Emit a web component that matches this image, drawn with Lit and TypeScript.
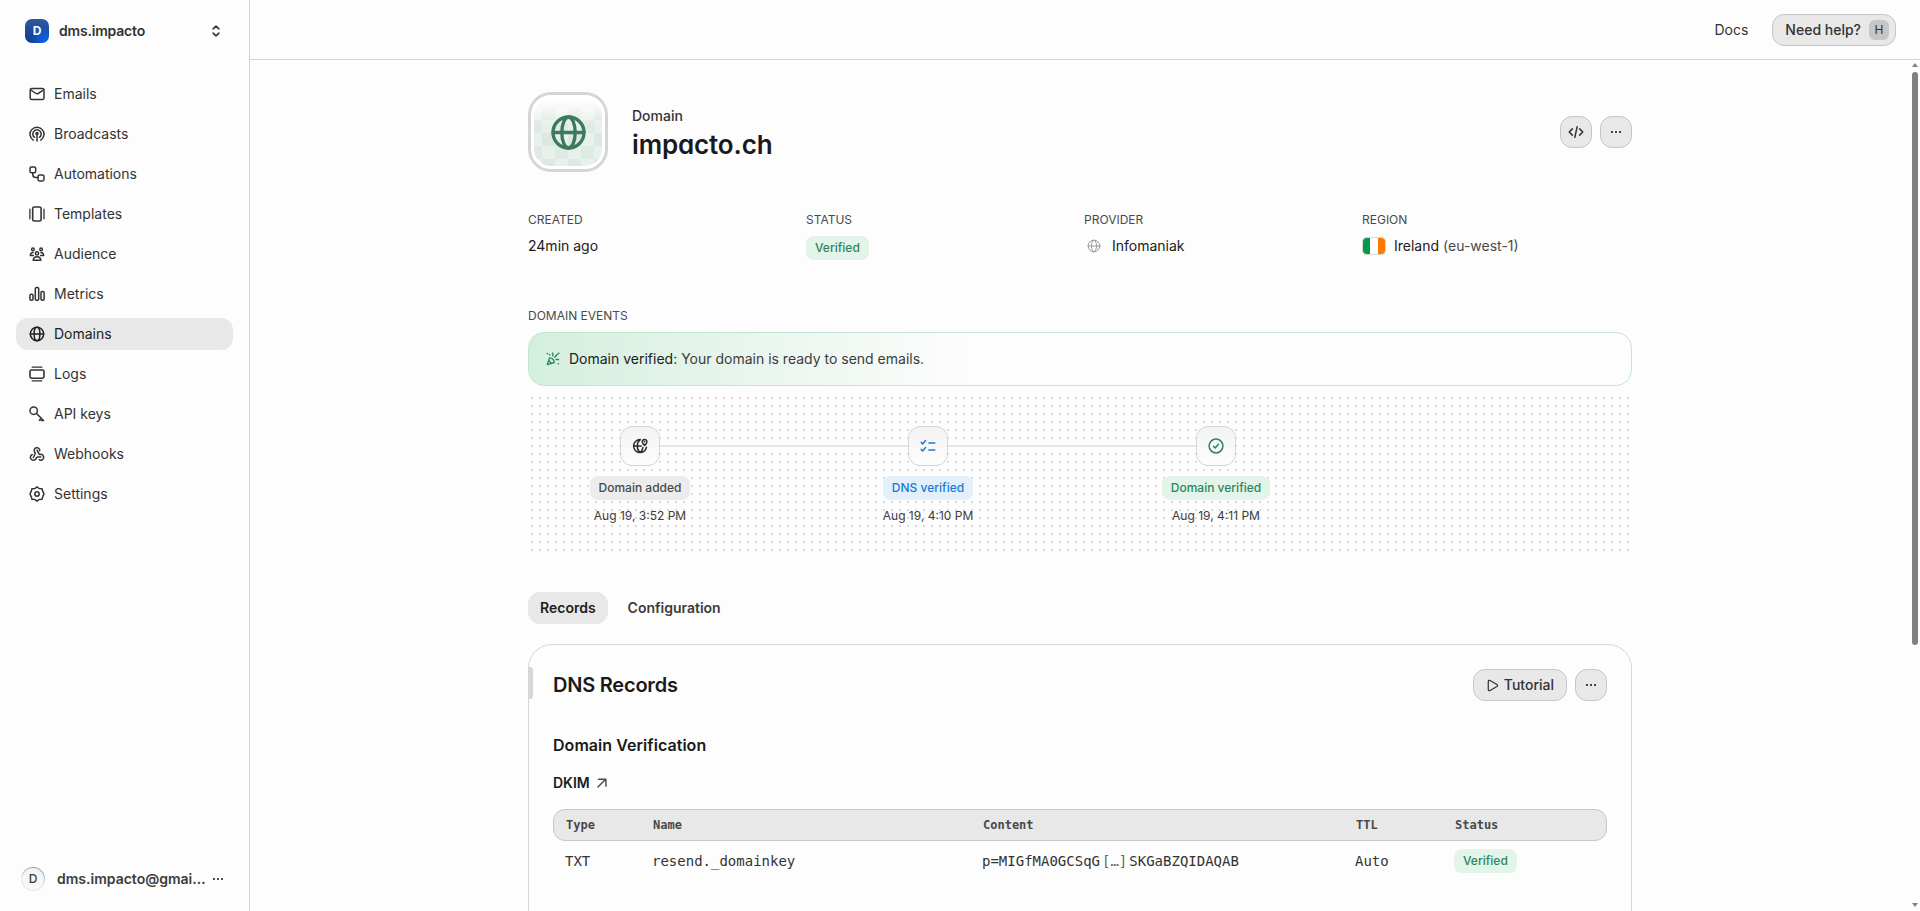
import { LitElement, html, css, svg } from "lit";
import { customElement, property } from "lit/decorators.js";

const icons: Record<string, unknown> = {
  mail: svg`<rect x="1.2" y="2.5" width="13.8" height="11" rx="1.6"/><path d="M1.8 4 7 7.5c.7.45 1.5.45 2.2 0L14.4 4"/>`,
  broadcast: svg`<path d="M8 7.6V14.9M4.2 14.1A7 7 0 1 1 11.8 14.1M5.4 11.3A4.2 4.2 0 1 1 10.6 11.3"/><circle cx="8" cy="7.6" r="1"/>`,
  automation: svg`<rect x="1" y="1" width="5.7" height="5.7" rx="1.5"/><rect x="9" y="8.9" width="6" height="6" rx="1.6"/><path d="M3.8 6.8V8.5a3.1 3.1 0 0 0 3.1 3.1H8.8"/>`,
  templates: svg`<rect x="3.7" y="1" width="8.4" height="14" rx="1.6" stroke-width="1.6"/><path d="M.9 3.2v9.6M15 3.2v9.6" stroke-width="1.3"/>`,
  audience: svg`<circle cx="8" cy="7.4" r="1.6"/><path d="M4.2 14.2c.2-2.1 1.7-3.5 3.8-3.5s3.6 1.4 3.8 3.5zM4.3 9.5H1.3C1.5 7.8 2.5 6.7 4 6.6M11.7 9.5h3C14.5 7.8 13.5 6.7 12 6.6"/><circle cx="3.9" cy="3.4" r="1.3"/><circle cx="12.1" cy="3.4" r="1.3"/>`,
  metrics: svg`<rect x=".9" y="8.2" width="3.1" height="6" rx="1.2"/><rect x="6.3" y="1.6" width="3.4" height="12.6" rx="1.2"/><rect x="12" y="5.4" width="3.1" height="8.8" rx="1.2"/>`,
  globe: svg`<circle cx="8" cy="8" r="6.7"/><ellipse cx="8" cy="8" rx="2.9" ry="6.7"/><path d="M1.3 8h13.4"/>`,
  logs: svg`<rect x="1" y="4" width="14" height="8.2" rx="1.6" stroke-width="1.6"/><path d="M3.2 1.2h9.6M3.2 14.9h9.6" stroke-width="1.3"/>`,
  key: svg`<circle cx="4.7" cy="4.7" r="3.7"/><path d="m7.5 7.5 6.8 6.8M10.4 14.2l1.9-2.2M12.2 14.5h2.3"/>`,
  webhook: svg`<path d="M11.8 10.9H8.7c-.7 0-1.1.4-1.4 1.1a3 3 0 1 1-4.1-3.5"/><path d="M4.3 11.5 6.1 8c.3-.6.1-1.2-.3-1.7a2.8 2.8 0 1 1 4.9-1.6"/><path d="m8 4.2 1.8 3.4c.3.6.8.8 1.5.8a2.9 2.9 0 1 1-1.1 5.3"/>`,
  gear: svg`<path d="M8 .9 10.1 2.5 13 2.7 13.9 5.6 15 8 13.9 10.4 13 13.3 10.1 13.5 8 15.1 5.9 13.5 3 13.3 2.1 10.4 1 8 2.1 5.6 3 2.7 5.9 2.5z"/><circle cx="8" cy="8" r="2.2"/>`,
  updown: svg`<path d="M5.1 5.9 8 3.1l2.9 2.8M5.1 10.1 8 12.9l2.9-2.8"/>`,
  dots: svg`<path fill="currentColor" stroke="none" d="M3 7.1h1.8v1.8H3zM7.1 7.1h1.8v1.8H7.1zM11.2 7.1H13v1.8h-1.8z"/>`,
  code: svg`<path d="M4.3 4.9 1.2 8l3.1 3.1M11.7 4.9 14.8 8l-3.1 3.1M9.2 2.7 6.8 13.3"/>`,
  party: svg`<path d="M4 6.7 1.4 14.4 9.4 12C9.2 9.1 7 6.9 4 6.7zM3.6 10 5.8 12.7M7.5 1.2c.8 1 .8 2 .1 3.2M9.9 6.2l3-3.6M11.4 8.8c.9-.4 1.9-.5 3 0"/><path stroke-width="1.9" d="M1.6 1.8h.1M14 13.4h.1M14.4 1.6h.1M4.3 3.2h.1"/>`,
  globepin: svg`<path d="M8.2 1.6A6.5 6.5 0 1 0 14.5 9.2M1.7 8h7.5M8.2 1.6C4.3 4.6 4.3 11.6 8 14.5c1.6-1.2 2.6-2.9 2.8-4.9"/><path d="M12.6 7.4c1.5-1.4 2.3-2.4 2.3-3.7a2.3 2.3 0 0 0-4.6 0c0 1.3.8 2.3 2.3 3.7z"/><path d="M12.6 3.6v.2"/>`,
  checks: svg`<path d="m1.2 4.4 1.4 1.5 3-3.3M1.2 11.4l1.4 1.5 3-3.3M8.9 4.9h5.9M8.9 12h5.9"/>`,
  check: svg`<circle cx="8" cy="8" r="6.9"/><path d="m5.6 8.4 1.6 1.6 3.2-3.8"/>`,
  play: svg`<path d="M2.8 3v10c0 1.2 1.1 1.8 2.1 1.2l8.6-4.9c1-.6 1-1.9 0-2.5L4.9 1.8c-1-.6-2.1 0-2.1 1.2z"/>`,
  arrow: svg`<path d="M3.3 12.5 12.3 3.8M4 3.7h8.5v8.1"/>`,
};

@customElement("ui-icon")
class UiIcon extends LitElement {
  @property() name = "";
  @property({ type: Number }) size = 16;
  @property({ type: Number }) weight = 1.5;
  static styles = css`
    :host { display: inline-flex; flex: none; }
    svg { display: block; }
  `;
  render() {
    return html`<svg width=${this.size} height=${this.size} viewBox="0 0 16 16" fill="none" stroke="currentColor"
      stroke-width=${this.weight} stroke-linecap="round" stroke-linejoin="round">${icons[this.name]}</svg>`;
  }
}

const nav = [
  ["mail", "Emails"], ["broadcast", "Broadcasts"], ["automation", "Automations"], ["templates", "Templates"],
  ["audience", "Audience"], ["metrics", "Metrics"], ["globe", "Domains"], ["logs", "Logs"],
  ["key", "API keys"], ["webhook", "Webhooks"], ["gear", "Settings"],
];

const events = [
  { icon: "globepin", tone: "gray", label: "Domain added", date: "Aug 19, 3:52 PM" },
  { icon: "checks", tone: "blue", label: "DNS verified", date: "Aug 19, 4:10 PM" },
  { icon: "check", tone: "green", label: "Domain verified", date: "Aug 19, 4:11 PM" },
];

@customElement("app-root")
class AppRoot extends LitElement {
  static styles = css`
    :host {
      display: flex; height: 100vh; overflow: hidden; background: #fdfdfd; color: #202020;
      font: 400 14px/20px Inter, sans-serif;
    }
    * { box-sizing: border-box; }
    h1, h2, h3, h4 { margin: 0; }
    .sidebar { width: 250px; flex: none; border-right: 1px solid #d4d4d4; display: flex; flex-direction: column; }
    .workspace { height: 62px; padding: 0 25px; display: flex; align-items: center; font-weight: 600; letter-spacing: -.2px; color: #333; }
    .workspace .logo {
      width: 24px; height: 24px; border-radius: 7px; margin-right: 10px; color: #fff; font-size: 12px; font-weight: 700;
      display: grid; place-items: center;
      background: radial-gradient(circle at 82% 88%, #0c64e8 0, #0c57cf66 40%, transparent 60%), linear-gradient(#3058a4, #12398a);
    }
    .workspace ui-icon { margin-left: auto; margin-right: 0; }
    .nav { display: flex; flex-direction: column; gap: 8px; padding: 16px; flex: 1; }
    .item { height: 32px; border-radius: 12px; padding: 0 13px; display: flex; align-items: center; gap: 9px; color: #333; }
    .item.active { background: #e8e8e8; color: #202020; }
    .account { height: 64px; padding: 0 23px 0 21px; display: flex; align-items: center; font-weight: 600; color: #3c3c3c; }
    .account .avatar {
      width: 24px; height: 24px; border-radius: 50%; margin-right: 12px; font-size: 12px; font-weight: 500;
      display: grid; place-items: center; border: 1px solid transparent;
      background: linear-gradient(#f3f3f3, #f8f8f8) padding-box, linear-gradient(200deg, #888, #e8e8e8 60%) border-box;
    }
    .account .name { width: 149px; white-space: nowrap; margin-right: 4px; }
    .main { flex: 1; display: flex; flex-direction: column; min-width: 0; }
    .topbar { height: 60px; flex: none; border-bottom: 1px solid #d4d4d4; display: flex; align-items: center; justify-content: flex-end; gap: 24px; padding-right: 24px; color: #333; }
    .btn {
      height: 32px; border: 1px solid #c6c6c6; background: #e8e8e8; border-radius: 12px; color: #333;
      display: inline-flex; align-items: center; justify-content: center; font-weight: 500;
    }
    .btn.square { width: 32px; }
    .help { padding: 0 6px 0 12px; gap: 8px; }
    kbd { width: 20px; height: 20px; border-radius: 6px; background: #c6c6c6; font: 400 12px/20px Inter, sans-serif; text-align: center; color: #333; }
    .body { flex: 1; min-height: 0; display: flex; }
    .scroll { flex: 1; min-width: 0; overflow: hidden; display: flex; justify-content: center; }
    .bar { width: 10px; display: flex; flex-direction: column; align-items: center; padding: 3px 0 4px; }
    .bar .up, .bar .down { border: 3px solid transparent; }
    .bar .up { border-bottom: 4px solid #808080; border-top: 0; }
    .bar .down { border-top: 4px solid #808080; border-bottom: 0; margin-top: auto; }
    .bar .thumb { width: 6px; height: 573px; border-radius: 3px; background: #808080; margin-top: 5px; }
    .page { width: 1104px; padding-top: 32px; }
    .head { display: flex; align-items: center; height: 80px; }
    .tile { width: 80px; height: 80px; border: 3px solid #d5d5d5; border-radius: 23px; background: #fff; padding: 3px; }
    .tile .inner {
      height: 68px; border-radius: 17px; display: grid; place-items: center; color: #3c7a5c;
      background: linear-gradient(#fff, #fff0 40%),
        conic-gradient(#d3ddd870 25%, #e8f1ec70 0 50%, #d3ddd850 0 75%, #eaf3ee70 0) -5px 9px / 26px 26px, #e6f1eb;
    }
    .titles { margin-left: 24px; flex: 1; padding-top: 5px; }
    .kind { font-weight: 500; color: #333; }
    h1 { font-size: 26px; line-height: 38px; font-weight: 600; font-feature-settings: "cv11"; letter-spacing: -.15px; color: #1a1a1a; }
    .actions { display: flex; gap: 8px; }
    .meta { display: grid; grid-template-columns: repeat(4, 1fr); gap: 8px; margin-top: 39px; height: 60px; }
    .label { font-size: 12px; line-height: 18px; color: #4a4a4a; text-transform: uppercase; }
    .value { margin-top: 7px; height: 20px; display: flex; align-items: center; color: #202020; }
    .value ui-icon { margin: 0 11px 0 3px; color: #999; }
    .value .dim { color: #4a4a4a; margin-left: 4px; }
    .badge { height: 24px; border-radius: 8px; padding: 0 9px; display: inline-flex; align-items: center; font-size: 12px; line-height: 16px; font-weight: 500; white-space: nowrap; }
    .value .badge { margin-top: 4px; }
    .green { background: #e3f4e9; color: #2c8560; }
    .blue { background: #e3f0fb; color: #187bd6; }
    .gray { background: #ececec; color: #484848; }
    .flag { width: 24px; height: 18px; border: 1px solid #d8d8d8; border-radius: 4px; margin-right: 8px; background: linear-gradient(90deg, #009a49 33.3%, #fff 0 66.6%, #ff7900 0) padding-box; }
    .events-label { margin-top: 36px; }
    .banner {
      margin-top: 7px; height: 54px; border: 1px solid #c3e6d1; border-radius: 16px; padding: 0 16px 0 17px; display: flex; align-items: center; gap: 9px;
      background: linear-gradient(90deg, #d4efdf, #ebf6ef 22%, #fdfdfd 40%); color: #3c3c3c;
    }
    .banner ui-icon { color: #2c8560; }
    .banner b { font-weight: 400; color: #202020; }
    .timeline {
      margin-top: 8px; height: 160px; padding-top: 32px;
      background: url("data:image/svg+xml,%3Csvg xmlns='http://www.w3.org/2000/svg' width='8' height='8'%3E%3Crect x='3' y='3' width='2' height='2' fill='%23dadada'/%3E%3C/svg%3E");
    }
    .nodes { display: flex; align-items: center; padding-left: 92px; }
    .node { width: 40px; height: 40px; border: 1px solid #d6d6d6; border-radius: 12px; background: linear-gradient(#f3f3f3, #fdfdfd); display: grid; place-items: center; color: #2a2a2a; }
    .node.n-blue { color: #187bd6; }
    .node.n-green { color: #2c8560; }
    .line { width: 248px; height: 2px; background: #e4e4e4; }
    .captions { display: flex; gap: 64px; margin-top: 10px; }
    .caption { width: 224px; display: flex; flex-direction: column; align-items: center; gap: 7px; font-size: 12px; line-height: 18px; color: #3c3c3c; }
    .tabs { display: flex; gap: 8px; margin-top: 38px; }
    .tab { height: 32px; border-radius: 12px; padding: 0 12px; line-height: 32px; font-weight: 600; color: #3c3c3c; }
    .tab.on { background: #e8e8e8; color: #202020; }
    .card { margin-top: 20px; height: 400px; border: 1px solid #d6d6d6; border-radius: 24px; padding: 24px; }
    .cardhead { display: flex; align-items: center; gap: 8px; height: 32px; }
    .mark { width: 5px; height: 32px; border-radius: 0 3px 3px 0; background: #d6d6d6; margin: -4px 20px 0 -25px; }
    h2 { font-size: 20px; line-height: 28px; font-weight: 600; letter-spacing: -.22px; flex: 1; margin-left: -8px; color: #1a1a1a; }
    .tutorial { padding: 0 12px; gap: 5px; }
    h3 { font-size: 16px; line-height: 24px; font-weight: 600; margin-top: 32px; letter-spacing: .05px; color: #1a1a1a; }
    h4 { font-size: 14px; line-height: 20px; font-weight: 600; margin-top: 16px; display: flex; align-items: center; gap: 5px; color: #1a1a1a; }
    h4 ui-icon { color: #4a4a4a; }
    .row { display: grid; grid-template-columns: 87px 330px 373px 99px 1fr; padding: 0 11px 0 12px; align-items: center; font-family: "DejaVu Sans Mono", monospace; }
    .thead { margin-top: 16px; height: 32px; border: 1px solid #c6c6c6; border-radius: 12px; background: #e8e8e8; font-size: 12px; font-weight: 700; color: #484848; }
    .trow { height: 40px; padding: 0 12px; color: #333; }
    .trow .badge { font-family: Inter, sans-serif; justify-self: start; }
    .cut { margin: 0 2px; color: #666; }
  `;
  render() {
    return html`
      <aside class="sidebar">
        <div class="workspace"><span class="logo">D</span>dms.impacto<ui-icon name="updown"></ui-icon></div>
        <nav class="nav">
          ${nav.map(([i, t]) => html`<div class="item ${t === "Domains" ? "active" : ""}"><ui-icon name=${i}></ui-icon>${t}</div>`)}
        </nav>
        <div class="account"><span class="avatar">D</span><span class="name">dms.impacto@gmai…</span><ui-icon name="dots"></ui-icon></div>
      </aside>
      <main class="main">
        <header class="topbar"><span>Docs</span><span class="btn help">Need help?<kbd>H</kbd></span></header>
        <div class="body">
          <div class="scroll">
            <div class="page">
              <div class="head">
                <div class="tile"><div class="inner"><ui-icon name="globe" size="37" weight="1.45"></ui-icon></div></div>
                <div class="titles"><div class="kind">Domain</div><h1>impacto.ch</h1></div>
                <div class="actions">
                  <span class="btn square"><ui-icon name="code"></ui-icon></span>
                  <span class="btn square"><ui-icon name="dots"></ui-icon></span>
                </div>
              </div>
              <div class="meta">
                <div><div class="label">Created</div><div class="value">24min ago</div></div>
                <div><div class="label">Status</div><div class="value"><span class="badge green">Verified</span></div></div>
                <div><div class="label">Provider</div><div class="value"><ui-icon name="globe" size="14" weight="1.1"></ui-icon>Infomaniak</div></div>
                <div><div class="label">Region</div><div class="value"><span class="flag"></span>Ireland <span class="dim">(eu-west-1)</span></div></div>
              </div>
              <div class="label events-label">Domain events</div>
              <div class="banner"><ui-icon name="party" size="14"></ui-icon><span><b>Domain verified:</b> Your domain is ready to send emails.</span></div>
              <div class="timeline">
                <div class="nodes">
                  ${events.map((e, i) => html`${i ? html`<span class="line"></span>` : ""}<span class="node n-${e.tone}"><ui-icon name=${e.icon}></ui-icon></span>`)}
                </div>
                <div class="captions">
                  ${events.map((e) => html`<div class="caption"><span class="badge ${e.tone}">${e.label}</span><span>${e.date}</span></div>`)}
                </div>
              </div>
              <div class="tabs"><span class="tab on">Records</span><span class="tab">Configuration</span></div>
              <section class="card">
                <div class="cardhead">
                  <span class="mark"></span><h2>DNS Records</h2>
                  <span class="btn tutorial"><ui-icon name="play" size="13"></ui-icon>Tutorial</span>
                  <span class="btn square"><ui-icon name="dots"></ui-icon></span>
                </div>
                <h3>Domain Verification</h3>
                <h4>DKIM <ui-icon name="arrow" size="14" weight="1.6"></ui-icon></h4>
                <div class="row thead"><span>Type</span><span>Name</span><span>Content</span><span>TTL</span><span>Status</span></div>
                <div class="row trow"><span>TXT</span><span>resend._domainkey</span><span>p=MIGfMA0GCSqG<span class="cut">[…]</span>SKGaBZQIDAQAB</span><span>Auto</span><span class="badge green">Verified</span></div>
              </section>
            </div>
          </div>
          <div class="bar"><span class="up"></span><span class="thumb"></span><span class="down"></span></div>
        </div>
      </main>
    `;
  }
}
